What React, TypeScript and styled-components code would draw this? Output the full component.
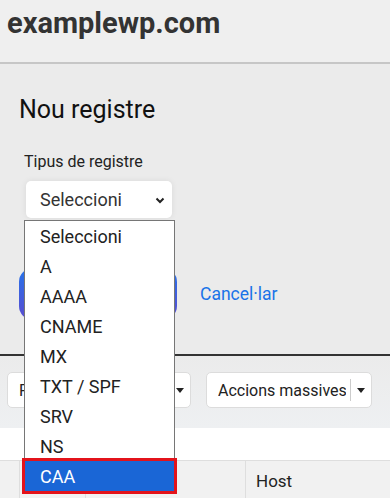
import React from 'react';
import styled, { createGlobalStyle } from 'styled-components';

const GlobalStyle = createGlobalStyle`
  body {
    margin: 0;
    font-family: Roboto, "Liberation Sans", Arial, sans-serif;
    color: #222;
    background: #fff;
  }
  * { box-sizing: border-box; }
`;

const Page = styled.div`
  width: 390px;
  height: 498px;
  overflow: hidden;
`;

const Header = styled.header`
  height: 64px;
  padding: 6px 7px 0;
  background: #efefef;
  border-bottom: 2px solid #c6c6c6;
`;

const SiteTitle = styled.h1`
  margin: 0;
  font-size: 29px;
  font-weight: 700;
  color: #333;
  line-height: normal;
`;

const FormSection = styled.section`
  background: #ebebeb;
  padding: 31px 19px 34px;
  border-bottom: 2px solid #333;
`;

const FormTitle = styled.h2`
  margin: 0 0 28px;
  font-size: 25px;
  font-weight: 400;
  color: #111;
  line-height: normal;
`;

const Label = styled.label`
  display: block;
  margin: 0 0 10px 5px;
  font-size: 16px;
  line-height: 19px;
  color: #222;
`;

const SelectWrap = styled.div`
  position: relative;
  margin-left: 7px;
  width: 146px;
`;

const SelectBox = styled.div`
  height: 37px;
  display: flex;
  align-items: center;
  justify-content: space-between;
  padding: 0 6px 0 14px;
  background: #fff;
  border-radius: 5px;
  box-shadow: 0 0 6px rgba(0, 0, 0, 0.08);
  font-size: 18px;
  color: #333;
`;

const OptionList = styled.ul`
  position: absolute;
  top: 39px;
  left: -2px;
  width: 151px;
  margin: 0;
  padding: 0;
  list-style: none;
  background: #fff;
  border: 1px solid #767676;
  z-index: 5;
`;

const Option = styled.li<{ $active?: boolean }>`
  height: 30px;
  display: flex;
  align-items: center;
  padding-left: 15px;
  font-size: 18px;
  color: ${p => (p.$active ? '#fff' : '#222')};
  background: ${p => (p.$active ? '#1a66d6' : 'transparent')};
  outline: ${p => (p.$active ? '3px solid #e3131b' : 'none')};
  outline-offset: 0;
`;

const Actions = styled.div`
  display: flex;
  align-items: center;
  gap: 23px;
  margin-top: 50px;
`;

const PrimaryButton = styled.button`
  width: 158px;
  height: 52px;
  border: none;
  border-radius: 14px;
  background: linear-gradient(180deg, #2573ea 0%, #5a4bcf 100%);
  color: #fff;
  font-family: inherit;
  font-size: 17px;
`;

const LinkButton = styled.a`
  font-size: 17.5px;
  color: #1a73e8;
  text-decoration: none;
`;

const Toolbar = styled.div`
  height: 72px;
  display: flex;
  gap: 15px;
  padding: 16px 7px 0;
  background: linear-gradient(180deg, #ebebeb 0%, #eef0f2 100%);
`;

const ToolControl = styled.div<{ $w: number }>`
  width: ${p => p.$w}px;
  height: 36px;
  display: flex;
  align-items: center;
  padding: 0 6px 0 11px;
  background: #fff;
  border: 1px solid #dcdcdc;
  border-radius: 5px;
  font-size: 16px;
  color: #222;
`;

const ControlText = styled.span`
  flex: 1;
  white-space: nowrap;
  overflow: hidden;
`;

const Divider = styled.span`
  width: 1px;
  height: 22px;
  background: #ccc;
  margin: 0 6px 0 4px;
`;

const Caret = styled.span`
  width: 0;
  height: 0;
  border-left: 4px solid transparent;
  border-right: 4px solid transparent;
  border-top: 5px solid #222;
`;

const Table = styled.div`
  margin-top: 32px;
  display: grid;
  grid-template-columns: 20px 66px 160px 1fr;
  background: #f1f1f1;
  border-top: 1px solid #dedede;
`;

const HeadCell = styled.div`
  height: 40px;
  display: flex;
  align-items: center;
  padding-left: 10px;
  font-size: 17px;
  color: #222;
  border-right: 1px solid #dedede;
  &:last-child { border-right: none; }
`;

const Chevron = () => (
  <svg width="12" height="12" viewBox="0 0 12 12">
    <path d="M2.5 4.5 L6 8 L9.5 4.5" fill="none" stroke="#222" strokeWidth="2" />
  </svg>
);

const types = ['Seleccioni', 'A', 'AAAA', 'CNAME', 'MX', 'TXT / SPF', 'SRV', 'NS', 'CAA'];

export default function App() {
  return (
    <Page>
      <GlobalStyle />
      <Header>
        <SiteTitle>examplewp.com</SiteTitle>
      </Header>
      <FormSection>
        <FormTitle>Nou registre</FormTitle>
        <Label>Tipus de registre</Label>
        <SelectWrap>
          <SelectBox>
            Seleccioni
            <Chevron />
          </SelectBox>
          <OptionList>
            {types.map(t => (
              <Option key={t} $active={t === 'CAA'}>{t}</Option>
            ))}
          </OptionList>
        </SelectWrap>
        <Actions>
          <PrimaryButton aria-label="Afegeix" />
          <LinkButton href="#">Cancel·lar</LinkButton>
        </Actions>
      </FormSection>
      <Toolbar>
        <ToolControl $w={184}>
          <ControlText>F</ControlText>
          <Caret />
        </ToolControl>
        <ToolControl $w={166}>
          <ControlText>Accions massives</ControlText>
          <Divider />
          <Caret />
        </ToolControl>
      </Toolbar>
      <Table>
        <HeadCell />
        <HeadCell />
        <HeadCell />
        <HeadCell>Host</HeadCell>
      </Table>
    </Page>
  );
}
